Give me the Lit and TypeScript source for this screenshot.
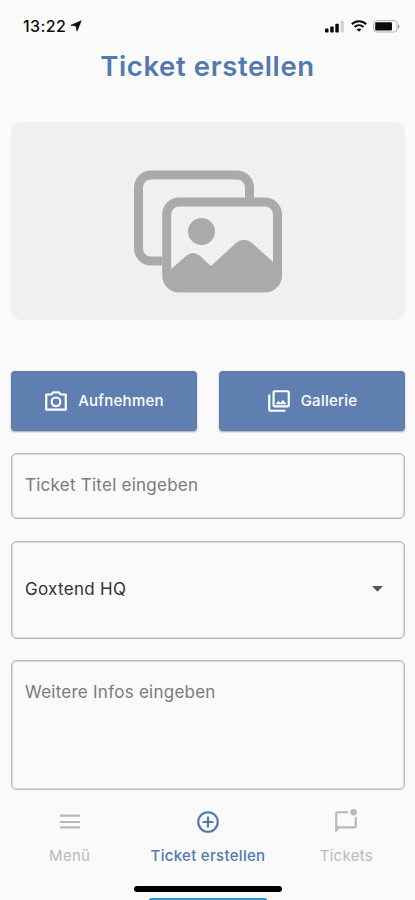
import { LitElement, html, css } from "lit";
import { customElement } from "lit/decorators.js";

@customElement("app-root")
export class AppRoot extends LitElement {
  static styles = css`
    :host {
      display: flex;
      flex-direction: column;
      width: 415px;
      height: 900px;
      overflow: hidden;
      box-sizing: border-box;
      background: #fafafa;
      font-family: Inter, "Liberation Sans", sans-serif;
      color: #222;
    }
    * { box-sizing: border-box; }
    svg { display: block; flex: none; }
    .status, h1, main, nav { flex: none; }
    .status {
      height: 49px;
      padding: 3px 15px 0 23px;
      display: flex;
      align-items: center;
      color: #0c0c0c;
    }
    .time { font-size: 16px; font-weight: 500; letter-spacing: 0.4px; line-height: 20px; }
    .loc { margin-left: 4px; }
    .signals { margin-left: auto; display: flex; align-items: center; gap: 6px; }
    h1 {
      margin: 0;
      height: 34px;
      line-height: 34px;
      text-align: center;
      font-size: 27.5px;
      font-weight: 600;
      letter-spacing: 0.6px;
      color: #5379af;
    }
    main { padding: 39px 10px 0 11px; display: flex; flex-direction: column; }
    .preview {
      height: 198px;
      border-radius: 11px;
      background: #f0f0f0;
      display: flex;
      justify-content: center;
      padding: 48px 0 0 0;
    }
    .buttons { margin-top: 51px; display: grid; grid-template-columns: 1fr 1fr; gap: 22px; }
    .btn {
      height: 60px;
      border: 0;
      border-radius: 4px;
      background: #607fb1;
      box-shadow: 0 1px 2px rgba(0, 0, 0, 0.35);
      color: #fff;
      display: flex;
      align-items: center;
      justify-content: center;
      gap: 9px;
      font-family: inherit;
      font-size: 15px;
      font-weight: 500;
      letter-spacing: 0.25px;
      padding: 0 1px 1px 0;
    }
    .box {
      margin-top: 22px;
      border: 1px solid #bcbcbc;
      box-shadow: inset 0 0 0 1px #dadada;
      border-radius: 5px;
      padding: 0 13px;
      display: flex;
      align-items: center;
      font-size: 17px;
      line-height: 22px;
      color: #7b7b7b;
      letter-spacing: 0.25px;
    }
    .title { height: 66px; padding-bottom: 2px; }
    .select { height: 98px; justify-content: space-between; color: #333; letter-spacing: 0.3px; padding-right: 21px; padding-bottom: 2px; }
    .info { height: 130px; margin-top: 21px; align-items: flex-start; padding-top: 20px; }
    nav { display: grid; grid-template-columns: repeat(3, 1fr); margin-top: 19px; color: #b9b9b9; }
    .tab {
      display: flex;
      flex-direction: column;
      align-items: center;
      gap: 11px;
      font-size: 15px;
      line-height: 20px;
      letter-spacing: 0.3px;
      padding-left: 1px;
    }
    .active { color: #5278ae; font-weight: 500; }
    .home { margin: 20px auto 0; width: 148px; height: 6px; border-radius: 3px; background: #000; flex: none; }
    .strip { margin: 6px auto 0; width: 118px; height: 4px; border-radius: 2px; background: #2d95d8; flex: none; }
  `;

  render() {
    return html`
      <div class="status">
        <span class="time">13:22</span>
        <svg class="loc" width="12" height="12" viewBox="0 0 12 12"><path d="M11.3.7 7 11.2 6 6 .8 5.3z" fill="currentColor" stroke="currentColor" stroke-width=".6" /></svg>
        <div class="signals">
          <svg width="20" height="13" viewBox="0 0 20 13" fill="currentColor">
            <rect x="0" y="8.500" width="3.500" height="4" rx=".8" /><rect x="5.200" y="6.500" width="3.500" height="6" rx=".8" />
            <rect x="10.300" y="3.700" width="3.500" height="8.800" rx=".8" /><rect x="15.600" y=".8" width="3.200" height="11.700" rx=".8" fill="#cfcfcf" />
          </svg>
          <svg width="16" height="12" viewBox="0 0 16 12" fill="none" stroke="currentColor" stroke-width="2">
            <path d="M.8 4.200c4.200-4 10.200-4 14.400 0M3.500 7c2.600-2.500 6.400-2.500 9 0" /><path d="M5.600 9.300c1.400-1.200 3.400-1.200 4.800 0L8 11.800z" fill="currentColor" stroke="none" />
          </svg>
          <svg width="27" height="13" viewBox="0 0 27 13">
            <rect x=".6" y=".6" width="23.500" height="11.400" rx="3" fill="none" stroke="#b4b4b4" />
            <rect x="2.200" y="2.200" width="16.800" height="8.200" rx="1.200" fill="currentColor" />
            <path d="M25 4.200c2 .8 2 3.600 0 4.400z" fill="#999" />
          </svg>
        </div>
      </div>
      <h1>Ticket erstellen</h1>
      <main>
        <div class="preview">
          <svg width="148" height="123" viewBox="0 0 148 123">
            <path d="M28 91H17A12.500 12.500 0 0 1 4.500 78.500V17.500A12.500 12.500 0 0 1 17 5H103A12.500 12.500 0 0 1 115.500 17.500V28" fill="none" stroke="#aaa" stroke-width="9" />
            <rect x="32.700" y="32" width="110.800" height="86" rx="12.500" fill="#f0f0f0" stroke="#aaa" stroke-width="9" />
            <circle cx="67.500" cy="61.500" r="13.500" fill="#aaa" />
            <path d="M35 101 52.500 85.500Q59 80.500 65.500 85.500L77 96 102 73Q110 66.500 118 73L142 94.500V107Q142 118 131 118H46Q35 118 35 107Z" fill="#aaa" />
          </svg>
        </div>
        <div class="buttons">
          <button class="btn">
            <svg width="26" height="26" viewBox="0 0 24 24" fill="none" stroke="currentColor" stroke-width="2"><path d="M3 6h4.600L9.300 4h5.400l1.700 2H21v14H3z" stroke-linejoin="round" /><circle cx="12" cy="12.800" r="4" /></svg>
            Aufnehmen
          </button>
          <button class="btn">
            <svg width="26" height="26" viewBox="0 0 24 24" fill="currentColor"><path d="M20 4v12H8V4h12m0-2H8c-1.100 0-2 .9-2 2v12c0 1.100.9 2 2 2h12c1.100 0 2-.9 2-2V4c0-1.100-.9-2-2-2zm-8.500 9.670 1.690 2.260 2.480-3.100L19 15H9zM2 6v14c0 1.100.9 2 2 2h14v-2H4V6H2z" /></svg>
            Gallerie
          </button>
        </div>
        <div class="box title">Ticket Titel eingeben</div>
        <div class="box select">
          Goxtend HQ
          <svg width="11" height="6" viewBox="0 0 11 6"><path d="M0 0h11L5.500 5.800z" fill="#555" /></svg>
        </div>
        <div class="box info">Weitere Infos eingeben</div>
      </main>
      <nav>
        <div class="tab">
          <svg width="26" height="26" viewBox="0 0 26 26" fill="currentColor"><path d="M3 5.600h20v2.200H3zM3 11.900h20v2.200H3zM3 17.300h20v2.200H3z" /></svg>
          <span>Menü</span>
        </div>
        <div class="tab active">
          <svg width="26" height="26" viewBox="0 0 24 24" fill="currentColor"><path d="M13 7h-2v4H7v2h4v4h2v-4h4v-2h-4zM12 2a10 10 0 1 0 0 20 10 10 0 0 0 0-20zm0 18a8 8 0 1 1 0-16 8 8 0 0 1 0 16z" /></svg>
          <span>Ticket erstellen</span>
        </div>
        <div class="tab">
          <svg width="26" height="26" viewBox="0 0 24 24" fill="currentColor"><path d="M22 6.980V16c0 1.100-.9 2-2 2H6l-4 4V4c0-1.100.9-2 2-2h10.100a5 5 0 0 0 0 2H4v12h16V7.900a5 5 0 0 0 2-.92zM16 3a3 3 0 1 0 6 0 3 3 0 0 0-6 0z" /></svg>
          <span>Tickets</span>
        </div>
      </nav>
      <div class="home"></div>
      <div class="strip"></div>
    `;
  }
}
